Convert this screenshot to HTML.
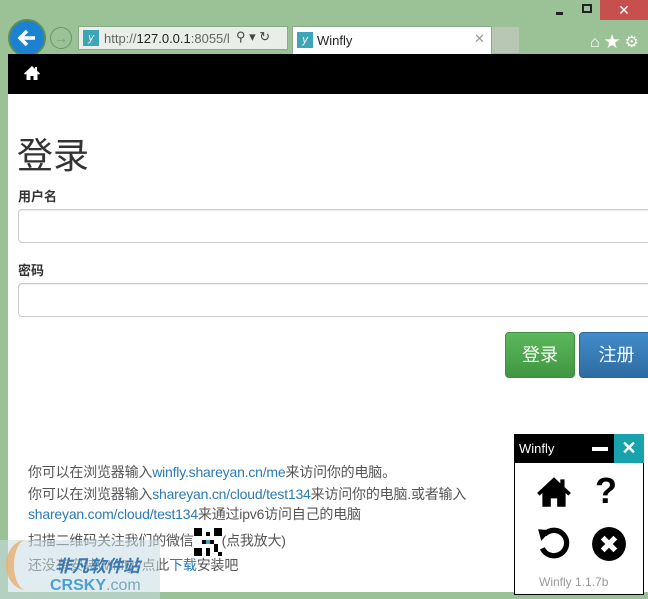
<!DOCTYPE html>
<html><head><meta charset="utf-8"><style>
*{margin:0;padding:0;box-sizing:border-box}
body{width:648px;height:599px;overflow:hidden;background:#9bc196;font-family:"Liberation Sans","Noto Sans CJK SC",sans-serif;position:relative}
.abs{position:absolute}
.page{left:8px;top:54px;width:640px;height:538px;background:#fff}
.nav{left:8px;top:54px;width:640px;height:40px;background:#000}
.cjk{font-family:"Liberation Sans","Noto Sans CJK SC",sans-serif}
.input{border:1px solid #ccc;border-radius:4px;height:34px;left:18px;width:640px;box-shadow:inset 0 1px 1px rgba(0,0,0,.075)}
.lbl{font-size:13px;font-weight:bold;color:#333;left:18px}
.btn{top:332px;height:46px;border-radius:4px;color:#fff;font-size:18px;text-align:center;line-height:44px}
.txt{left:28px;font-size:14px;color:#555;white-space:nowrap;letter-spacing:-0.2px}
a{color:#2a7ab8;text-decoration:none}
</style></head><body>
<div class="abs" style="left:556px;top:12px;width:7px;height:3px;background:#222"></div>
<div class="abs" style="left:582px;top:4px;width:10px;height:9px;border:2px solid #222"></div>
<div class="abs" style="left:600px;top:0;width:48px;height:20px;background:#c7504e;color:#fff;font-size:14px;text-align:center;line-height:20px">✕</div>
<div class="abs" style="left:8px;top:19px;width:38px;height:38px;border-radius:50%;background:#1b81d1;border:2px solid #5c8d5a"></div>
<svg class="abs" style="left:15px;top:26px" width="24" height="24" viewBox="0 0 24 24"><path d="M20 12H6M12 5l-7 7 7 7" stroke="#fff" stroke-width="3.5" fill="none"/></svg>
<div class="abs" style="left:50px;top:27px;width:22px;height:22px;border-radius:50%;border:1px solid #6a946a;color:#7a9a7a;font-size:14px;text-align:center;line-height:20px">→</div>
<div class="abs" style="left:78px;top:26px;width:210px;height:24px;background:#e9efe8;border:1px solid #8aa88a"></div>
<div class="abs" style="left:83px;top:30px;width:16px;height:16px;background:#3da5b8;color:#fff;font-size:11px;text-align:center;line-height:16px;font-style:italic">y</div>
<div class="abs" style="left:104px;top:31px;font-size:13px;color:#666;white-space:nowrap;width:128px;overflow:hidden">http://<b style="color:#222;font-weight:normal">127.0.0.1</b>:8055/l</div>
<div class="abs" style="left:236px;top:29px;font-size:13px;color:#444">⚲ ▾ ↻</div>
<div class="abs" style="left:292px;top:26px;width:200px;height:28px;background:#fff;border:1px solid #8aa88a;border-bottom:none"></div>
<div class="abs" style="left:297px;top:32px;width:16px;height:16px;background:#3da5b8;color:#fff;font-size:11px;text-align:center;line-height:16px;font-style:italic">y</div>
<div class="abs" style="left:317px;top:33px;font-size:13px;color:#222">Winfly</div>
<div class="abs" style="left:474px;top:31px;font-size:13px;color:#999">✕</div>
<div class="abs" style="left:492px;top:27px;width:27px;height:26px;background:#b8c6b4"></div>
<div class="abs" style="left:590px;top:28px;font-size:16px;color:#fff">⌂ ★ ⚙</div>

<div class="abs page"></div>
<div class="abs nav"></div>
<svg class="abs" style="left:23px;top:65px" width="18" height="16" viewBox="0 0 18 16"><path d="M9 1L1 8.5l1.2 1.2L3.5 8.5V15h4v-4h3v4h4V8.5l1.3 1.2L17 8.5l-3-2.8V2h-2v1.9z" fill="#fff"/></svg>

<div class="abs cjk" style="left:17px;top:133px;font-size:36px;color:#333;line-height:46px">登录</div>
<div class="abs lbl" style="top:186px">用户名</div>
<div class="abs input" style="top:209px"></div>
<div class="abs lbl" style="top:260px">密码</div>
<div class="abs input" style="top:283px"></div>
<div class="abs btn" style="left:505px;width:70px;background:linear-gradient(#5cb85c,#419641);border:1px solid #3e8f3e">登录</div>
<div class="abs btn" style="left:579px;width:75px;background:linear-gradient(#428bca,#2d6ca2);border:1px solid #2b669a">注册</div>

<div class="abs txt" style="top:462px">你可以在浏览器输入<a>winfly.shareyan.cn/me</a>来访问你的电脑。</div>
<div class="abs txt" style="top:484px">你可以在浏览器输入<a>shareyan.cn/cloud/test134</a>来访问你的电脑.或者输入</div>
<div class="abs txt" style="top:504px"><a>shareyan.com/cloud/test134</a>来通过ipv6访问自己的电脑</div>
<div class="abs txt" style="top:528px">扫描二维码关注我们的微信<svg width="28" height="28" viewBox="0 0 7 7" style="vertical-align:middle"><path d="M0 0h2v2H0zM5 0h2v2H5zM0 5h2v2H0zM3 1h1v1H3zM2 3h3v1H2zM5 4h1v2H5zM3 5h1v2H3zM6 6h1v1H6z" fill="#000"/><rect x="3" y="3" width="1" height="1" fill="#3da5b8"/></svg>(点我放大)</div>
<div class="abs txt" style="top:555px">还没有安装Winfly?点此<a>下载</a>安装吧</div>
<div class="abs" style="left:0;top:540px;width:160px;height:59px;background:rgba(200,220,230,.55)"></div>
<div class="abs" style="left:6px;top:540px;width:40px;height:50px;border-radius:50%;border-left:8px solid #e8b070;opacity:.8"></div>
<div class="abs" style="left:55px;top:552px;font-size:17px;font-weight:bold;font-style:italic;color:#3a7ab0">非凡软件站</div>
<div class="abs" style="left:50px;top:577px;font-size:16px;font-weight:bold;color:#4aa0d0">CRSKY<span style="font-weight:normal;color:#7ab">.com</span></div>

<div class="abs" style="left:514px;top:434px;width:130px;height:161px;background:#fff;border:1px solid #000"></div>
<div class="abs" style="left:514px;top:434px;width:100px;height:29px;background:#000;color:#fff;font-size:13px;line-height:29px;padding-left:5px">Winfly</div>
<div class="abs" style="left:592px;top:447px;width:16px;height:4px;background:#fff"></div>
<div class="abs" style="left:614px;top:434px;width:30px;height:29px;background:#17a2ad;color:#fff;font-size:18px;font-weight:bold;text-align:center;line-height:29px">✕</div>
<svg class="abs" style="left:535px;top:475px" width="38" height="34" viewBox="0 0 18 16"><path d="M9 1L1 8.5l1.2 1.2L3.5 8.5V15h4v-4h3v4h4V8.5l1.3 1.2L17 8.5l-3-2.8V2h-2v1.9z" fill="#000"/></svg>
<div class="abs" style="left:595px;top:470px;font-size:36px;font-weight:bold;color:#000">?</div>
<svg class="abs" style="left:536px;top:525px" width="36" height="36" viewBox="0 0 34 34"><path d="M8 9A12 12 0 1 1 6 22" stroke="#000" stroke-width="5" fill="none"/><path d="M2 4l12 1-9 10z" fill="#000"/></svg>
<svg class="abs" style="left:591px;top:526px" width="36" height="36" viewBox="0 0 34 34"><circle cx="17" cy="17" r="16" fill="#000"/><path d="M11 11l12 12M23 11L11 23" stroke="#fff" stroke-width="5"/></svg>
<div class="abs" style="left:539px;top:575px;font-size:12px;color:#999">Winfly 1.1.7b</div>
</body></html>
